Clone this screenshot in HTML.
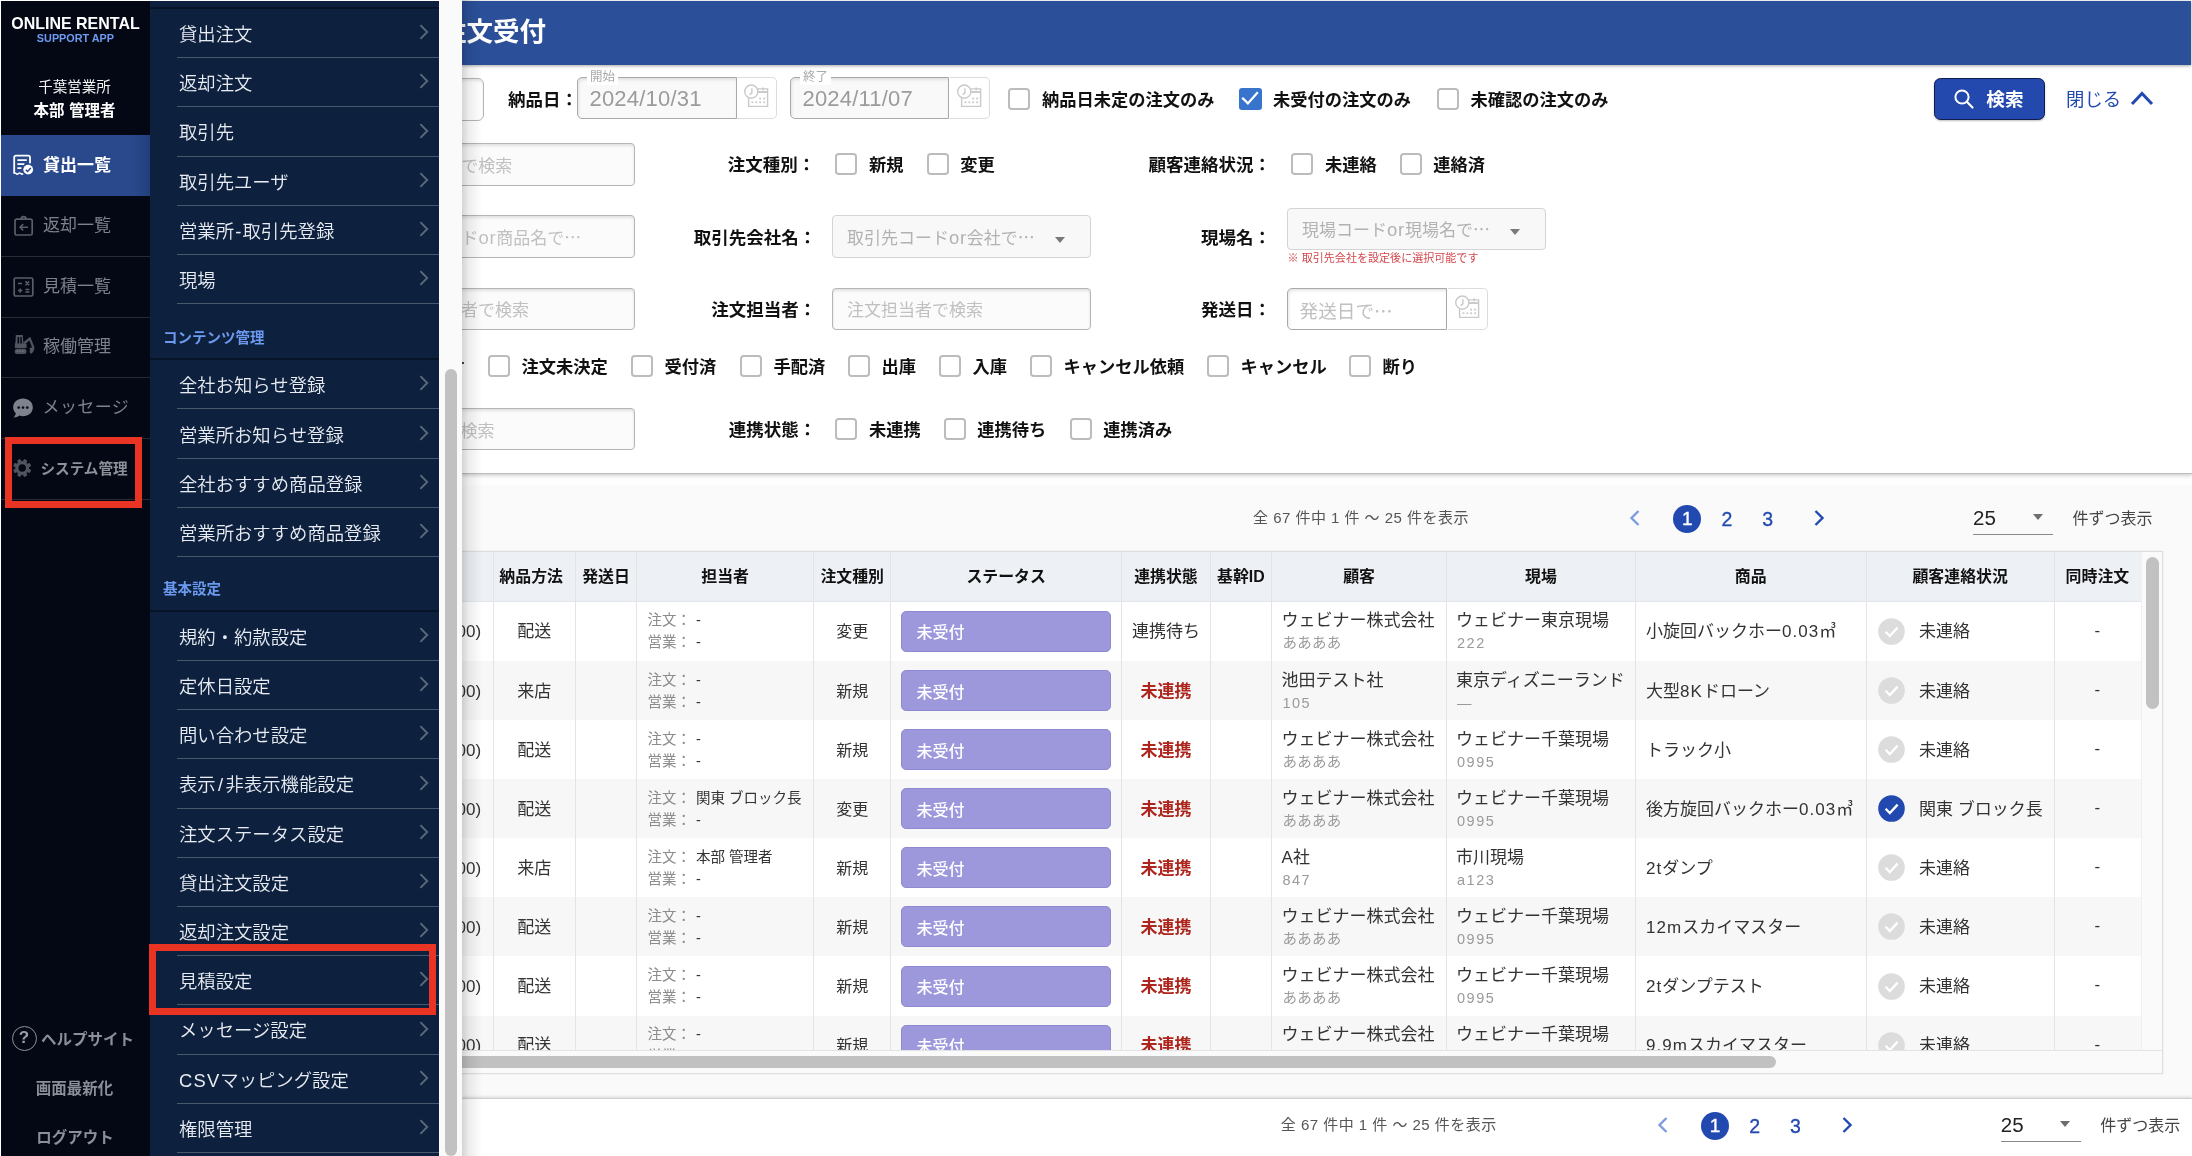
<!DOCTYPE html>
<html lang="ja">
<head>
<meta charset="utf-8">
<title>注文受付</title>
<style>

*{box-sizing:border-box;margin:0;padding:0}
html,body{width:2192px;height:1156px;overflow:hidden;background:#fff}
body{font-family:"Liberation Sans","Noto Sans CJK JP",sans-serif;color:#222;position:relative}
.abs{position:absolute}
/* ---------- sidebar ---------- */
#side,#sub,#main{will-change:transform}
#side{position:absolute;left:1px;top:1px;width:149px;height:1155px;background:#040814;color:#fff}
#side .logo1{position:absolute;left:0;width:149px;top:12.2px;text-align:center;font-weight:700;font-size:16.4px;letter-spacing:0;line-height:20px;color:#fff;white-space:nowrap;transform:scaleX(.975);transform-origin:74px 0}
#side .logo2{position:absolute;left:0;width:149px;top:30px;text-align:center;font-weight:700;font-size:11.5px;line-height:14px;color:#6f9cf3;white-space:nowrap;transform:scaleX(.94);transform-origin:73.2px 0}
#side .office{position:absolute;left:-1px;width:149px;top:75px;text-align:center;font-size:14.5px;line-height:22px;color:#f2f2f2}
#side .user{position:absolute;left:-1px;width:149px;top:98.6px;text-align:center;font-size:15.5px;line-height:22px;font-weight:700;color:#fff}
.nav{position:absolute;left:0;width:149px;height:61px;border-bottom:1px solid #262b36;color:#7d828c;font-size:17px;line-height:60.6px;white-space:nowrap}
.nav span{position:absolute;left:42px;top:0}
.nav svg{position:absolute;left:12px;top:19px}
.nav.act{line-height:62.4px;background:linear-gradient(90deg,#2a498d 0,#2a498d 88%,#223f7c 100%);color:#fff;font-weight:700;border-bottom:none}
.nav.sys{color:#8d9199;font-weight:700;font-size:14.6px;line-height:61px}
.bot{position:absolute;left:0;width:149px;text-align:center;font-weight:700;color:#8b8f99;font-size:15.5px;line-height:25px;white-space:nowrap}
/* ---------- submenu ---------- */
#sub{position:absolute;left:150px;top:0;width:289px;height:1156px;background:#0d203e;color:#e9edf3;overflow:hidden;border-top:1px solid #fff}
.mi{position:absolute;left:26.5px;width:262.5px;height:49.2px;border-bottom:1.3px solid #4a586e;font-size:18.35px;line-height:51.5px;font-weight:350;padding-left:2.5px;white-space:nowrap;color:#e8ecf2}
.mi svg{position:absolute;right:10px;top:14.2px}
.sec{position:absolute;left:13px;font-size:14.5px;font-weight:700;color:#6b9af0;line-height:20px;white-space:nowrap}
.secl{position:absolute;left:0;width:289px;height:2px;background:#071326}
.redbox{position:absolute;border:7px solid #e93323;z-index:50}
/* ---------- main ---------- */
#gap{position:absolute;left:439px;top:0;width:23px;height:1156px;background:#fafafa}
#gap .thumb{position:absolute;left:6px;top:369px;width:12px;height:787px;border-radius:7px;background:#c1c1c1}
#main{position:absolute;left:462px;top:0;width:1730px;height:1156px;background:#fafafa;overflow:hidden}
#hdr{position:absolute;left:0;top:1px;width:1729px;height:64px;background:#2b4f99;box-shadow:0 1px 3px rgba(0,0,0,.35);z-index:5}
#hdr .t{position:absolute;left:-22px;top:0;line-height:62px;font-size:26.5px;font-weight:700;color:#fff;white-space:nowrap}
#lsh{position:absolute;left:0;top:0;width:20px;height:1156px;background:linear-gradient(90deg,rgba(0,0,0,.17),rgba(0,0,0,.07) 35%,rgba(0,0,0,0));z-index:40}

.nav .ic{position:absolute;width:26px;height:26px;line-height:0}
.nav .ic svg{position:static}
.qm{position:absolute;left:10.5px;top:1025px;width:25px;height:25px;border:1.2px solid #8d919b;border-radius:50%;color:#9a9fa8;font-weight:700;font-size:17px;line-height:22.5px;text-align:center}

#fp{position:absolute;left:0;top:65px;width:1730px;height:409px;background:#fff;border-bottom:1.6px solid #bdbdbd;box-shadow:0 2px 3px rgba(0,0,0,.16)}
#fp2{position:absolute;left:0;top:474px;width:1730px;height:11px;background:#fdfdfd}
.lab{position:absolute;font-weight:700;font-size:17.5px;line-height:32.6px;color:#111;white-space:nowrap}
.cb{position:absolute;width:22.2px;height:22.2px;border:2.1px solid #bcbcbc;border-radius:3.8px;background:#fff}
.cb.on{background:#3873cc;border-color:#3873cc;border-radius:3px}
.cb svg{position:absolute;left:-2.1px;top:-2.1px}
.cbl{position:absolute;font-weight:700;font-size:17.25px;line-height:33.4px;color:#111;white-space:nowrap}
.inp{position:absolute;border:1px solid #b5b5b5;border-radius:4px;background:#fbfbfb;box-shadow:inset 0 2px 3px rgba(0,0,0,.10)}
.sel{position:absolute;border:1px solid #d4d4d4;border-radius:4px;background:#f8f8f8}
.ph{position:absolute;font-size:17px;line-height:33px;color:#c0c0c0;white-space:nowrap}
.tri{position:absolute;width:0;height:0;border-left:5.8px solid transparent;border-right:5.8px solid transparent;border-top:6.2px solid #7a7a7a}
.dt{position:absolute;border:1px solid #a9a9a9;border-radius:5px 0 0 5px;background:#f9f9f9;box-shadow:inset 1px 2px 3px rgba(0,0,0,.10)}
.calb{position:absolute;border:1px solid #dcdcdc;border-left:none;border-radius:0 5px 5px 0;background:#fff}
.calb svg{position:absolute;left:5px;top:6px}
.leg{position:absolute;font-size:12.5px;line-height:16px;color:#aaa;background:#fff;padding:0 3px;white-space:nowrap}
.dv{position:absolute;font-size:22px;line-height:32px;color:#9b9b9b;white-space:nowrap;letter-spacing:.2px}
.sbtn{position:absolute;background:#2449ae;border:1.2px solid #101c4c;border-radius:6.5px;color:#fff;box-shadow:0 1px 2px rgba(0,0,0,.25)}
.sbtn span{position:absolute;left:51.5px;top:6.5px;font-size:18.6px;font-weight:700;line-height:30px}
.close{position:absolute;font-size:18.4px;line-height:31.5px;color:#2249b0;white-space:nowrap}
.lo{font-size:18.5px;letter-spacing:.7px;line-height:1px}
.el{font-family:"Noto Sans CJK JP",sans-serif;line-height:1px}
.ph2{color:#b2b2b2}
.note{position:absolute;font-size:11.05px;line-height:17px;color:#d2474c;white-space:nowrap}

.pinfo{position:absolute;font-size:15px;line-height:30.5px;color:#555;white-space:nowrap;letter-spacing:.48px}
.pcur{position:absolute;width:28px;height:28px;border-radius:14px;background:#2249b0;color:#fff;font-size:19px;line-height:28px;text-align:center;-webkit-text-stroke:.35px #fff}
.pnum{position:absolute;width:30px;font-size:19.5px;line-height:30px;color:#2249b0;text-align:center;-webkit-text-stroke:.3px #2249b0}
.psel{position:absolute;font-size:20.5px;line-height:32px;color:#222}
.pper{position:absolute;font-size:16px;line-height:32px;color:#444;white-space:nowrap}
#tw{position:absolute;background:#fff;border:1px solid #dedede;box-shadow:0 0 2px rgba(0,0,0,.08)}
#tb{position:absolute;overflow:hidden;background:#fff}
.th{position:absolute;height:50.3px;background:#edf1f5;border-bottom:1px solid #e2e6ea}
.thc{position:absolute;text-align:center;font-weight:700;font-size:15.9px;line-height:30px;color:#111;white-space:nowrap}
.tr{position:absolute;left:0}
.vl{position:absolute;top:0;width:1px;height:520px;background:#e4e4e4}
.cc{text-align:center}
.c17{position:absolute;font-size:17px;line-height:31.8px;color:#333;white-space:nowrap}
.c16{position:absolute;font-size:16px;line-height:32px;color:#333;white-space:nowrap}
.c14{position:absolute;font-size:14.5px;line-height:29.5px;color:#333;white-space:nowrap}
.c14g{position:absolute;font-size:14.5px;line-height:29.5px;color:#8c8c8c;white-space:nowrap}
.c14s{position:absolute;font-size:14.5px;line-height:29.5px;color:#9a9a9a;white-space:nowrap;letter-spacing:.3px}
.lt{letter-spacing:1.05px}
.lt2{letter-spacing:1.5px}
.c17.red{color:#ad251c;font-weight:700}
.badge{position:absolute;width:210px;height:41px;border-radius:5px;background:#9d98dc;border:1px solid #8e89d1;color:#fff}
.badge span{position:absolute;left:14.5px;top:6.5px;font-size:16px;line-height:30px;font-weight:500}
#ft{position:absolute;left:0;top:1098px;width:1730px;height:58px;background:#fff;border-top:1px solid #d0d0d0;box-shadow:0 -1px 3px rgba(0,0,0,.15)}

</style>
</head>
<body>

<div id="side">
  <div class="logo1">ONLINE RENTAL</div>
  <div class="logo2">SUPPORT APP</div>
  <div class="office">千葉営業所</div>
  <div class="user">本部 管理者</div>
  <div class="nav act" style="top:134px"><div class="ic" style="left:11px;top:18px"><svg width="24" height="24" viewBox="0 0 24 24"><g fill="none" stroke="#fff" stroke-width="1.8" stroke-linejoin="round"><path d="M2.2 20.2 V4.4 Q2.2 2.6 4 2.6 H16.2 Q18 2.6 18 4.4 V10.5"/><path d="M5.4 7.2 H14.8 M5.4 11.2 H12.4 M5.4 15.2 H9.4" stroke-width="1.7"/><path d="M1.6 20.6 q1.2 -1.4 2.4 0 t2.4 0 t2.4 0 t2.4 0" stroke-width="1.5"/></g><circle cx="16.2" cy="16.6" r="6.3" fill="#2a498d"/><circle cx="16.2" cy="16.6" r="4.9" fill="#fff"/><path d="M13.8 16.7 L15.6 18.5 L18.8 14.9" fill="none" stroke="#2a498d" stroke-width="1.5"/></svg></div><span style="left:42px">貸出一覧</span></div>
  <div class="nav " style="top:195px"><div class="ic" style="left:11px;top:18px"><svg width="24" height="24" viewBox="0 0 24 24"><g fill="none" stroke="#5a5e69" stroke-width="1.7" stroke-linejoin="round"><rect x="3" y="5.2" width="17.2" height="15.8" rx="1.6"/><path d="M9.2 5 Q9.2 2.6 11.6 2.6 Q14 2.6 14 5"/><path d="M16 13.2 H8.2 M11.2 10 L8 13.2 L11.2 16.4" stroke-width="1.6"/></g></svg></div><span style="left:42px">返却一覧</span></div>
  <div class="nav " style="top:256px"><div class="ic" style="left:11px;top:18px"><svg width="24" height="24" viewBox="0 0 24 24"><g fill="none" stroke="#5a5e69" stroke-width="1.7"><rect x="2.2" y="3" width="18.6" height="18" rx="1.6"/><path d="M6 8.4 H10 M13.4 6.4 L17.2 10.2 M17.2 6.4 L13.4 10.2 M6 15.6 H10.4 M8.2 13.4 V17.8 M13.4 14.4 H17.4 M13.4 17 H17.4" stroke-width="1.5"/></g></svg></div><span style="left:42px">見積一覧</span></div>
  <div class="nav " style="top:316px"><div class="ic" style="left:11px;top:13px"><svg width="26" height="26" viewBox="0 0 26 26"><g fill="#50545f"><path d="M3.8 5 H10.7 L11.6 13.8 H14.6 V17.9 H2.9 V13.2 L3.4 13.2 Z"/><rect x="2.7" y="18.7" width="11.8" height="5.2" rx="2.5"/><path d="M11.4 12.2 L18.2 6.8 L22.6 17.4 L20.4 18.2 L17.4 10.6 L12.6 14.6 Z"/><path d="M17.4 18.2 L22 16.4 Q23.4 20.4 19 23.9 L17.5 22.2 Q18.8 20.4 17.4 18.2 Z"/></g><path d="M5.6 7 H7.1 V13.6 H5.6 Z M8.3 7 H9.6 L10 13.6 H8.3 Z" fill="#040814"/><path d="M4.6 21.3 H12.8" stroke="#7a7e88" stroke-width="1.1" stroke-dasharray="1.5 1.3"/></svg></div><span style="left:42px">稼働管理</span></div>
  <div class="nav " style="top:377px"><div class="ic" style="left:10.2px;top:17.6px"><svg width="24" height="24" viewBox="0 0 24 24"><path d="M12 2.6 C6.4 2.6 2.2 6.4 2.2 11.2 C2.2 13.6 3.2 15.6 4.8 17.2 C4.6 18.8 3.8 20.4 2.4 21.6 C5 21.6 7 20.8 8.4 19.6 C9.6 20 10.8 20.2 12 20.2 C17.6 20.2 21.8 16.2 21.8 11.4 C21.8 6.4 17.6 2.6 12 2.6 Z" fill="#7e828c"/><circle cx="7.7" cy="11.6" r="1.35" fill="#0b1020"/><circle cx="12" cy="11.6" r="1.35" fill="#0b1020"/><circle cx="16.3" cy="11.6" r="1.35" fill="#0b1020"/></svg></div><span style="left:41.6px"><b style="font-weight:400;letter-spacing:.35px">メッセージ</b></span></div>
  <div class="nav sys" style="top:438px"><div class="ic" style="left:11px;top:18px"><svg width="24" height="24" viewBox="0 0 24 24"><path d="M11.17 4.67 L12.29 2.55 L14.69 3.55 L13.98 5.84 L15.36 7.22 L17.65 6.51 L18.65 8.91 L16.53 10.03 L16.53 11.97 L18.65 13.09 L17.65 15.49 L15.36 14.78 L13.98 16.16 L14.69 18.45 L12.29 19.45 L11.17 17.33 L9.23 17.33 L8.11 19.45 L5.71 18.45 L6.42 16.16 L5.04 14.78 L2.75 15.49 L1.75 13.09 L3.87 11.97 L3.87 10.03 L1.75 8.91 L2.75 6.51 L5.04 7.22 L6.42 5.84 L5.71 3.55 L8.11 2.55 L9.23 4.67 Z" fill="#50545f" stroke="#50545f" stroke-width="1" stroke-linejoin="round"/><circle cx="10.2" cy="11" r="3.7" fill="#040814"/></svg></div><span style="left:39.5px">システム管理</span></div>
  <div class="qm">?</div>
  <div class="bot" style="top:1025.5px;left:40px;width:auto">ヘルプサイト</div>
  <div class="bot" style="top:1075px;left:-1px">画面最新化</div>
  <div class="bot" style="top:1124px;left:-0.5px">ログアウト</div>
</div>
<div id="sub">
<div class="secl" style="top:6px"></div>
<div class="mi" style="top:8.0px">貸出注文<svg width="10" height="18" viewBox="0 0 10 18"><path d="M1.4 2.2 L8.2 9 L1.4 15.8" fill="none" stroke="#5b6a79" stroke-width="1.9"/></svg></div>
<div class="mi" style="top:57.2px">返却注文<svg width="10" height="18" viewBox="0 0 10 18"><path d="M1.4 2.2 L8.2 9 L1.4 15.8" fill="none" stroke="#5b6a79" stroke-width="1.9"/></svg></div>
<div class="mi" style="top:106.4px">取引先<svg width="10" height="18" viewBox="0 0 10 18"><path d="M1.4 2.2 L8.2 9 L1.4 15.8" fill="none" stroke="#5b6a79" stroke-width="1.9"/></svg></div>
<div class="mi" style="top:155.6px">取引先ユーザ<svg width="10" height="18" viewBox="0 0 10 18"><path d="M1.4 2.2 L8.2 9 L1.4 15.8" fill="none" stroke="#5b6a79" stroke-width="1.9"/></svg></div>
<div class="mi" style="top:204.8px">営業所<span style="padding:0 1.2px">-</span>取引先登録<svg width="10" height="18" viewBox="0 0 10 18"><path d="M1.4 2.2 L8.2 9 L1.4 15.8" fill="none" stroke="#5b6a79" stroke-width="1.9"/></svg></div>
<div class="mi" style="top:254.0px">現場<svg width="10" height="18" viewBox="0 0 10 18"><path d="M1.4 2.2 L8.2 9 L1.4 15.8" fill="none" stroke="#5b6a79" stroke-width="1.9"/></svg></div>
<div class="sec" style="top:327px">コンテンツ管理</div>
<div class="secl" style="top:356.5px"></div>
<div class="mi" style="top:359.3px">全社お知らせ登録<svg width="10" height="18" viewBox="0 0 10 18"><path d="M1.4 2.2 L8.2 9 L1.4 15.8" fill="none" stroke="#5b6a79" stroke-width="1.9"/></svg></div>
<div class="mi" style="top:408.5px">営業所お知らせ登録<svg width="10" height="18" viewBox="0 0 10 18"><path d="M1.4 2.2 L8.2 9 L1.4 15.8" fill="none" stroke="#5b6a79" stroke-width="1.9"/></svg></div>
<div class="mi" style="top:457.7px">全社おすすめ商品登録<svg width="10" height="18" viewBox="0 0 10 18"><path d="M1.4 2.2 L8.2 9 L1.4 15.8" fill="none" stroke="#5b6a79" stroke-width="1.9"/></svg></div>
<div class="mi" style="top:506.9px">営業所おすすめ商品登録<svg width="10" height="18" viewBox="0 0 10 18"><path d="M1.4 2.2 L8.2 9 L1.4 15.8" fill="none" stroke="#5b6a79" stroke-width="1.9"/></svg></div>
<div class="sec" style="top:578px">基本設定</div>
<div class="secl" style="top:608.5px"></div>
<div class="mi" style="top:610.8px">規約・約款設定<svg width="10" height="18" viewBox="0 0 10 18"><path d="M1.4 2.2 L8.2 9 L1.4 15.8" fill="none" stroke="#5b6a79" stroke-width="1.9"/></svg></div>
<div class="mi" style="top:660.0px">定休日設定<svg width="10" height="18" viewBox="0 0 10 18"><path d="M1.4 2.2 L8.2 9 L1.4 15.8" fill="none" stroke="#5b6a79" stroke-width="1.9"/></svg></div>
<div class="mi" style="top:709.2px">問い合わせ設定<svg width="10" height="18" viewBox="0 0 10 18"><path d="M1.4 2.2 L8.2 9 L1.4 15.8" fill="none" stroke="#5b6a79" stroke-width="1.9"/></svg></div>
<div class="mi" style="top:758.4px">表示<span style="padding:0 2.6px 0 2.2px">/</span>非表示機能設定<svg width="10" height="18" viewBox="0 0 10 18"><path d="M1.4 2.2 L8.2 9 L1.4 15.8" fill="none" stroke="#5b6a79" stroke-width="1.9"/></svg></div>
<div class="mi" style="top:807.6px">注文ステータス設定<svg width="10" height="18" viewBox="0 0 10 18"><path d="M1.4 2.2 L8.2 9 L1.4 15.8" fill="none" stroke="#5b6a79" stroke-width="1.9"/></svg></div>
<div class="mi" style="top:856.8px">貸出注文設定<svg width="10" height="18" viewBox="0 0 10 18"><path d="M1.4 2.2 L8.2 9 L1.4 15.8" fill="none" stroke="#5b6a79" stroke-width="1.9"/></svg></div>
<div class="mi" style="top:906.0px">返却注文設定<svg width="10" height="18" viewBox="0 0 10 18"><path d="M1.4 2.2 L8.2 9 L1.4 15.8" fill="none" stroke="#5b6a79" stroke-width="1.9"/></svg></div>
<div class="mi" style="top:955.2px">見積設定<svg width="10" height="18" viewBox="0 0 10 18"><path d="M1.4 2.2 L8.2 9 L1.4 15.8" fill="none" stroke="#5b6a79" stroke-width="1.9"/></svg></div>
<div class="mi" style="top:1004.4px">メッセージ設定<svg width="10" height="18" viewBox="0 0 10 18"><path d="M1.4 2.2 L8.2 9 L1.4 15.8" fill="none" stroke="#5b6a79" stroke-width="1.9"/></svg></div>
<div class="mi" style="top:1053.6px"><span style="letter-spacing:1.2px">CSV</span>マッピング設定<svg width="10" height="18" viewBox="0 0 10 18"><path d="M1.4 2.2 L8.2 9 L1.4 15.8" fill="none" stroke="#5b6a79" stroke-width="1.9"/></svg></div>
<div class="mi" style="top:1102.8px">権限管理<svg width="10" height="18" viewBox="0 0 10 18"><path d="M1.4 2.2 L8.2 9 L1.4 15.8" fill="none" stroke="#5b6a79" stroke-width="1.9"/></svg></div>
</div>

<div id="gap"><div class="thumb"></div></div>
<div id="main">
  <div id="hdr"><div class="t">注文受付</div></div>
<div id="fp2"></div><div id="fp"></div>
<div class="inp" style="left:-40px;top:77.5px;width:61.5px;height:43px;border-radius:6px;background:#fff"></div>
<div class="lab" style="right:1614.0px;top:84.3px">納品日：</div>
<div class="dt" style="left:114.6px;top:76.9px;width:160.0px;height:42.2px"></div><div class="calb" style="left:274.6px;top:76.9px;width:40.8px;height:42.2px"><svg width="30" height="26" viewBox="0 0 30 26"><g fill="none" stroke="#c9c9c9" stroke-width="1.4"><path d="M15.8 4.9 H25.6 V22.4 H6.6 V14"/><path d="M15.5 8 H25.6" stroke-width="1.9"/><path d="M21.2 3.4 V6.2" stroke-width="1.6"/></g><g fill="#cdcdcd"><rect x="17.2" y="13.6" width="1.9" height="1.9"/><rect x="21.2" y="13.6" width="1.9" height="1.9"/><rect x="9.5" y="17.3" width="1.9" height="1.9"/><rect x="13.4" y="17.3" width="1.9" height="1.9"/><rect x="17.2" y="17.3" width="1.9" height="1.9"/><rect x="21.2" y="17.3" width="1.9" height="1.9"/></g><circle cx="9.3" cy="7.6" r="6.6" fill="#fff" stroke="#c9c9c9" stroke-width="1.4"/><path d="M9.9 4.2 V8.8 L7.6 10.6" fill="none" stroke="#c9c9c9" stroke-width="1.4"/></svg></div><div class="leg" style="left:125.0px;top:68.5px">開始</div><div class="dv" style="left:127.5px;top:83.0px">2024/10/31</div>
<div class="dt" style="left:327.6px;top:76.9px;width:159.9px;height:42.2px"></div><div class="calb" style="left:487.5px;top:76.9px;width:40.6px;height:42.2px"><svg width="30" height="26" viewBox="0 0 30 26"><g fill="none" stroke="#c9c9c9" stroke-width="1.4"><path d="M15.8 4.9 H25.6 V22.4 H6.6 V14"/><path d="M15.5 8 H25.6" stroke-width="1.9"/><path d="M21.2 3.4 V6.2" stroke-width="1.6"/></g><g fill="#cdcdcd"><rect x="17.2" y="13.6" width="1.9" height="1.9"/><rect x="21.2" y="13.6" width="1.9" height="1.9"/><rect x="9.5" y="17.3" width="1.9" height="1.9"/><rect x="13.4" y="17.3" width="1.9" height="1.9"/><rect x="17.2" y="17.3" width="1.9" height="1.9"/><rect x="21.2" y="17.3" width="1.9" height="1.9"/></g><circle cx="9.3" cy="7.6" r="6.6" fill="#fff" stroke="#c9c9c9" stroke-width="1.4"/><path d="M9.9 4.2 V8.8 L7.6 10.6" fill="none" stroke="#c9c9c9" stroke-width="1.4"/></svg></div><div class="leg" style="left:338.0px;top:68.5px">終了</div><div class="dv" style="left:340.5px;top:83.0px">2024/11/07</div>
<div class="cb" style="left:546.3px;top:87.5px"></div><div class="cbl" style="left:579.9px;top:83.6px">納品日未定の注文のみ</div>
<div class="cb on" style="left:777.4px;top:87.5px"><svg width="22" height="22" viewBox="0 0 22 22"><path d="M3.2 10.8 L8.9 16.4 L18.8 5.2" fill="none" stroke="#fff" stroke-width="2.3"/></svg></div><div class="cbl" style="left:811.0px;top:83.6px">未受付の注文のみ</div>
<div class="cb" style="left:975.0px;top:87.5px"></div><div class="cbl" style="left:1008.6px;top:83.6px">未確認の注文のみ</div>
<div class="sbtn" style="left:1471.8px;top:77.7px;width:111.2px;height:42.3px"><svg width="22" height="22" viewBox="0 0 22 22" style="position:absolute;left:18.5px;top:9px"><circle cx="9" cy="9" r="6.6" fill="none" stroke="#fff" stroke-width="2"/><path d="M13.8 13.8 L19.5 19.5" stroke="#fff" stroke-width="2.2" stroke-linecap="round"/></svg><span>検索</span></div>
<div class="close" style="left:1604.0px;top:84px">閉じる</div>
<svg class="abs" style="left:1667.0px;top:89px" width="26" height="18" viewBox="0 0 26 18"><path d="M3 15 L13 4.5 L23 15" fill="none" stroke="#2249b0" stroke-width="3"/></svg>
<div class="inp" style="left:-42.0px;top:142.7px;width:215.2px;height:43.6px"></div><div class="ph" style="left:-0.8px;top:150.0px">で検索</div>
<div class="lab" style="right:1376.8px;top:149.0px">注文種別：</div>
<div class="cb" style="left:373.3px;top:152.5px"></div><div class="cbl" style="left:406.9px;top:148.6px">新規</div>
<div class="cb" style="left:464.7px;top:152.5px"></div><div class="cbl" style="left:498.3px;top:148.6px">変更</div>
<div class="lab" style="right:921.1px;top:149.0px">顧客連絡状況：</div>
<div class="cb" style="left:829.3px;top:152.5px"></div><div class="cbl" style="left:862.9px;top:148.6px">未連絡</div>
<div class="cb" style="left:937.7px;top:152.5px"></div><div class="cbl" style="left:971.3px;top:148.6px">連絡済</div>
<div class="inp" style="left:-42.0px;top:214.8px;width:215.2px;height:43.2px"></div><div class="ph" style="left:-0.5px;top:221.9px">ド<span class="lo">or</span>商品名で<span class="el">…</span></div>
<div class="lab" style="right:1375.8px;top:222.0px">取引先会社名：</div>
<div class="sel" style="left:370.1px;top:214.9px;width:258.5px;height:43.2px"></div><div class="ph ph2" style="left:384.9px;top:222.0px">取引先コード<span class="lo">or</span>会社で<span class="el">…</span></div><div class="tri" style="left:592.6px;top:236.7px"></div>
<div class="lab" style="right:921.1px;top:222.0px">現場名：</div>
<div class="sel" style="left:825.3px;top:207.9px;width:258.5px;height:41.9px"></div><div class="ph ph2" style="left:840.1px;top:214.3px">現場コード<span class="lo">or</span>現場名で<span class="el">…</span></div><div class="tri" style="left:1048.0px;top:229.0px"></div>
<div class="note" style="left:825.6px;top:250px">※ 取引先会社を設定後に選択可能です</div>
<div class="inp" style="left:-42.0px;top:287.5px;width:215.2px;height:42.7px"></div><div class="ph" style="left:-1.0px;top:294.4px">者で検索</div>
<div class="lab" style="right:1375.8px;top:294.3px">注文担当者：</div>
<div class="inp" style="left:370.4px;top:287.5px;width:258.4px;height:42.7px"></div><div class="ph" style="left:384.9px;top:294.4px">注文担当者で検索</div>
<div class="lab" style="right:921.1px;top:294.3px">発送日：</div>
<div class="dt" style="background:#fff;left:825.2px;top:287.6px;width:160.3px;height:42.4px"></div><div class="calb" style="left:985.5px;top:287.6px;width:40.6px;height:42.4px"><svg width="30" height="26" viewBox="0 0 30 26"><g fill="none" stroke="#c9c9c9" stroke-width="1.4"><path d="M15.8 4.9 H25.6 V22.4 H6.6 V14"/><path d="M15.5 8 H25.6" stroke-width="1.9"/><path d="M21.2 3.4 V6.2" stroke-width="1.6"/></g><g fill="#cdcdcd"><rect x="17.2" y="13.6" width="1.9" height="1.9"/><rect x="21.2" y="13.6" width="1.9" height="1.9"/><rect x="9.5" y="17.3" width="1.9" height="1.9"/><rect x="13.4" y="17.3" width="1.9" height="1.9"/><rect x="17.2" y="17.3" width="1.9" height="1.9"/><rect x="21.2" y="17.3" width="1.9" height="1.9"/></g><circle cx="9.3" cy="7.6" r="6.6" fill="#fff" stroke="#c9c9c9" stroke-width="1.4"/><path d="M9.9 4.2 V8.8 L7.6 10.6" fill="none" stroke="#c9c9c9" stroke-width="1.4"/></svg></div><div class="dv" style="left:838.1px;top:293.9px"></div>
<div class="ph" style="font-size:18.6px;left:837.6px;top:294.9px">発送日で<span class="el">…</span></div>
<div class="abs" style="left:0.2px;top:362px;width:1.7px;height:2px;background:#444"></div>
<div class="cb" style="left:26.0px;top:355.2px"></div><div class="cbl" style="left:59.6px;top:351.3px">注文未決定</div>
<div class="cb" style="left:169.0px;top:355.2px"></div><div class="cbl" style="left:202.6px;top:351.3px">受付済</div>
<div class="cb" style="left:277.8px;top:355.2px"></div><div class="cbl" style="left:311.4px;top:351.3px">手配済</div>
<div class="cb" style="left:385.8px;top:355.2px"></div><div class="cbl" style="left:419.4px;top:351.3px">出庫</div>
<div class="cb" style="left:477.0px;top:355.2px"></div><div class="cbl" style="left:510.6px;top:351.3px">入庫</div>
<div class="cb" style="left:568.0px;top:355.2px"></div><div class="cbl" style="left:601.6px;top:351.3px">キャンセル依頼</div>
<div class="cb" style="left:745.0px;top:355.2px"></div><div class="cbl" style="left:778.6px;top:351.3px">キャンセル</div>
<div class="cb" style="left:887.0px;top:355.2px"></div><div class="cbl" style="left:920.6px;top:351.3px">断り</div>
<div class="inp" style="left:-42.0px;top:407.9px;width:215.2px;height:42.3px"></div><div class="ph" style="left:-1.6px;top:414.6px">検索</div>
<div class="lab" style="right:1375.8px;top:414.0px">連携状態：</div>
<div class="cb" style="left:373.3px;top:417.7px"></div><div class="cbl" style="left:406.9px;top:413.8px">未連携</div>
<div class="cb" style="left:481.7px;top:417.7px"></div><div class="cbl" style="left:515.3px;top:413.8px">連携待ち</div>
<div class="cb" style="left:607.6px;top:417.7px"></div><div class="cbl" style="left:641.2px;top:413.8px">連携済み</div>
<div class="pinfo" style="left:791.0px;top:503.0px">全 67 件中 1 件 ～ 25 件を表示</div><svg class="abs" style="left:1166.0px;top:508.0px" width="14" height="20" viewBox="0 0 14 20"><path d="M10.5 3 L3.5 10 L10.5 17" fill="none" stroke="#7f9be0" stroke-width="2.4"/></svg><div class="pcur" style="left:1211.2px;top:504.6px">1</div><div class="pnum" style="left:1250.0px;top:503.5px">2</div><div class="pnum" style="left:1290.6px;top:503.5px">3</div><svg class="abs" style="left:1350.0px;top:508.0px" width="14" height="20" viewBox="0 0 14 20"><path d="M3.5 3 L10.5 10 L3.5 17" fill="none" stroke="#2249b0" stroke-width="2.4"/></svg><div class="psel" style="left:1511.0px;top:502.0px">25</div><div class="tri" style="left:1570.6px;top:513.5px;border-top-color:#6e6e6e"></div><div class="abs" style="left:1511.0px;top:533.5px;width:80px;height:1.5px;background:#8a8a8a"></div><div class="pper" style="left:1610.4px;top:503.0px">件ずつ表示</div>
<div id="tw" style="left:-10px;top:551px;width:1711.0px;height:523px"></div>
<div id="tb" style="left:0;top:551.5px;width:1678.5px;height:498.5px"><div class="th" style="left:0;top:0;width:1678.5px"></div>
<div class="thc" style="left:28.0px;width:82.3px;top:10.6px">納品方法</div>
<div class="thc" style="left:113.3px;width:61.4px;top:10.6px">発送日</div>
<div class="thc" style="left:174.7px;width:177.0px;top:10.6px">担当者</div>
<div class="thc" style="left:351.7px;width:77.1px;top:10.6px">注文種別</div>
<div class="thc" style="left:428.8px;width:230.7px;top:10.6px">ステータス</div>
<div class="thc" style="left:659.5px;width:88.9px;top:10.6px">連携状態</div>
<div class="thc" style="left:748.4px;width:61.1px;top:10.6px">基幹ID</div>
<div class="thc" style="left:809.5px;width:175.1px;top:10.6px">顧客</div>
<div class="thc" style="left:984.6px;width:188.7px;top:10.6px">現場</div>
<div class="thc" style="left:1173.3px;width:230.7px;top:10.6px">商品</div>
<div class="thc" style="left:1404.0px;width:188.3px;top:10.6px">顧客連絡状況</div>
<div class="thc" style="left:1592.3px;width:86.2px;top:10.6px">同時注文</div>
<div class="tr" style="top:50.3px;height:59.6px;background:#fff;width:1678.5px"></div>
<div class="c17" style="left:-5.5px;top:64.8px">00)</div>
<div class="c17 cc" style="left:31.0px;width:82.3px;top:64.8px">配送</div>
<div class="c14g" style="left:185.5px;top:54.8px">注文：</div><div class="c14" style="left:234.0px;top:54.8px">-</div>
<div class="c14g" style="left:185.5px;top:76.8px">営業：</div><div class="c14" style="left:234.0px;top:76.8px">-</div>
<div class="c16 cc" style="left:351.7px;width:77.1px;top:64.8px">変更</div>
<div class="badge" style="left:438.9px;top:59.3px"><span>未受付</span></div>
<div class="c17 cc" style="left:659.5px;width:88.9px;top:64.8px">連携待ち</div>
<div class="c17" style="left:819.6px;top:53.8px">ウェビナー株式会社</div><div class="c14s" style="left:820.4px;top:77.8px">ああああ</div>
<div class="c17" style="left:994.0px;top:53.8px">ウェビナー東京現場</div><div class="c14s" style="left:995.0px;top:77.8px"><span class="lt2">222</span></div>
<div class="c17" style="left:1184.0px;top:64.8px">小旋回バックホー<span class="lt">0.03</span>㎥</div>
<div class="abs" style="left:1415.9px;top:66.3px;width:27px;height:27px"><svg width="27" height="27" viewBox="0 0 27 27"><circle cx="13.5" cy="13.5" r="13.3" fill="#dcdcdc"/><path d="M7.6 13.8 L11.8 18 L19.6 9.6" fill="none" stroke="#fff" stroke-width="2.3"/></svg></div>
<div class="c17" style="left:1457.0px;top:64.8px">未連絡</div>
<div class="c17 cc" style="left:1592.3px;width:86.2px;top:64.8px;margin-top:-1.6px">-</div>
<div class="tr" style="top:109.4px;height:59.6px;background:#f7f7f7;width:1678.5px"></div>
<div class="c17" style="left:-5.5px;top:124.0px">00)</div>
<div class="c17 cc" style="left:31.0px;width:82.3px;top:124.0px">来店</div>
<div class="c14g" style="left:185.5px;top:114.0px">注文：</div><div class="c14" style="left:234.0px;top:114.0px">-</div>
<div class="c14g" style="left:185.5px;top:136.0px">営業：</div><div class="c14" style="left:234.0px;top:136.0px">-</div>
<div class="c16 cc" style="left:351.7px;width:77.1px;top:124.0px">新規</div>
<div class="badge" style="left:438.9px;top:118.5px"><span>未受付</span></div>
<div class="c17 red cc" style="left:659.5px;width:88.9px;top:124.0px">未連携</div>
<div class="c17" style="left:819.6px;top:113.0px">池田テスト社</div><div class="c14s" style="left:820.4px;top:137.0px"><span class="lt2">105</span></div>
<div class="c17" style="left:994.0px;top:113.0px">東京ディズニーランド</div><div class="c14s" style="left:995.0px;top:137.0px">―</div>
<div class="c17" style="left:1184.0px;top:124.0px">大型<span class="lt">8K</span>ドローン</div>
<div class="abs" style="left:1415.9px;top:125.5px;width:27px;height:27px"><svg width="27" height="27" viewBox="0 0 27 27"><circle cx="13.5" cy="13.5" r="13.3" fill="#dcdcdc"/><path d="M7.6 13.8 L11.8 18 L19.6 9.6" fill="none" stroke="#fff" stroke-width="2.3"/></svg></div>
<div class="c17" style="left:1457.0px;top:124.0px">未連絡</div>
<div class="c17 cc" style="left:1592.3px;width:86.2px;top:124.0px;margin-top:-1.6px">-</div>
<div class="tr" style="top:168.5px;height:59.6px;background:#fff;width:1678.5px"></div>
<div class="c17" style="left:-5.5px;top:183.1px">00)</div>
<div class="c17 cc" style="left:31.0px;width:82.3px;top:183.1px">配送</div>
<div class="c14g" style="left:185.5px;top:173.1px">注文：</div><div class="c14" style="left:234.0px;top:173.1px">-</div>
<div class="c14g" style="left:185.5px;top:195.1px">営業：</div><div class="c14" style="left:234.0px;top:195.1px">-</div>
<div class="c16 cc" style="left:351.7px;width:77.1px;top:183.1px">新規</div>
<div class="badge" style="left:438.9px;top:177.6px"><span>未受付</span></div>
<div class="c17 red cc" style="left:659.5px;width:88.9px;top:183.1px">未連携</div>
<div class="c17" style="left:819.6px;top:172.1px">ウェビナー株式会社</div><div class="c14s" style="left:820.4px;top:196.1px">ああああ</div>
<div class="c17" style="left:994.0px;top:172.1px">ウェビナー千葉現場</div><div class="c14s" style="left:995.0px;top:196.1px"><span class="lt2">0995</span></div>
<div class="c17" style="left:1184.0px;top:183.1px">トラック小</div>
<div class="abs" style="left:1415.9px;top:184.6px;width:27px;height:27px"><svg width="27" height="27" viewBox="0 0 27 27"><circle cx="13.5" cy="13.5" r="13.3" fill="#dcdcdc"/><path d="M7.6 13.8 L11.8 18 L19.6 9.6" fill="none" stroke="#fff" stroke-width="2.3"/></svg></div>
<div class="c17" style="left:1457.0px;top:183.1px">未連絡</div>
<div class="c17 cc" style="left:1592.3px;width:86.2px;top:183.1px;margin-top:-1.6px">-</div>
<div class="tr" style="top:227.6px;height:59.6px;background:#f7f7f7;width:1678.5px"></div>
<div class="c17" style="left:-5.5px;top:242.2px">00)</div>
<div class="c17 cc" style="left:31.0px;width:82.3px;top:242.2px">配送</div>
<div class="c14g" style="left:185.5px;top:232.2px">注文：</div><div class="c14" style="left:234.0px;top:232.2px">関東 ブロック長</div>
<div class="c14g" style="left:185.5px;top:254.2px">営業：</div><div class="c14" style="left:234.0px;top:254.2px">-</div>
<div class="c16 cc" style="left:351.7px;width:77.1px;top:242.2px">変更</div>
<div class="badge" style="left:438.9px;top:236.7px"><span>未受付</span></div>
<div class="c17 red cc" style="left:659.5px;width:88.9px;top:242.2px">未連携</div>
<div class="c17" style="left:819.6px;top:231.2px">ウェビナー株式会社</div><div class="c14s" style="left:820.4px;top:255.2px">ああああ</div>
<div class="c17" style="left:994.0px;top:231.2px">ウェビナー千葉現場</div><div class="c14s" style="left:995.0px;top:255.2px"><span class="lt2">0995</span></div>
<div class="c17" style="left:1184.0px;top:242.2px">後方旋回バックホー<span class="lt">0.03</span>㎥</div>
<div class="abs" style="left:1415.9px;top:243.7px;width:27px;height:27px"><svg width="27" height="27" viewBox="0 0 27 27"><circle cx="13.5" cy="13.5" r="13.3" fill="#2249b0"/><path d="M7.6 13.8 L11.8 18 L19.6 9.6" fill="none" stroke="#fff" stroke-width="2.3"/></svg></div>
<div class="c17" style="left:1457.0px;top:242.2px">関東 ブロック長</div>
<div class="c17 cc" style="left:1592.3px;width:86.2px;top:242.2px;margin-top:-1.6px">-</div>
<div class="tr" style="top:286.7px;height:59.6px;background:#fff;width:1678.5px"></div>
<div class="c17" style="left:-5.5px;top:301.2px">00)</div>
<div class="c17 cc" style="left:31.0px;width:82.3px;top:301.2px">来店</div>
<div class="c14g" style="left:185.5px;top:291.2px">注文：</div><div class="c14" style="left:234.0px;top:291.2px">本部 管理者</div>
<div class="c14g" style="left:185.5px;top:313.2px">営業：</div><div class="c14" style="left:234.0px;top:313.2px">-</div>
<div class="c16 cc" style="left:351.7px;width:77.1px;top:301.2px">新規</div>
<div class="badge" style="left:438.9px;top:295.8px"><span>未受付</span></div>
<div class="c17 red cc" style="left:659.5px;width:88.9px;top:301.2px">未連携</div>
<div class="c17" style="left:819.6px;top:290.2px">A社</div><div class="c14s" style="left:820.4px;top:314.2px"><span class="lt2">847</span></div>
<div class="c17" style="left:994.0px;top:290.2px">市川現場</div><div class="c14s" style="left:995.0px;top:314.2px"><span class="lt2">a123</span></div>
<div class="c17" style="left:1184.0px;top:301.2px"><span class="lt">2t</span>ダンプ</div>
<div class="abs" style="left:1415.9px;top:302.8px;width:27px;height:27px"><svg width="27" height="27" viewBox="0 0 27 27"><circle cx="13.5" cy="13.5" r="13.3" fill="#dcdcdc"/><path d="M7.6 13.8 L11.8 18 L19.6 9.6" fill="none" stroke="#fff" stroke-width="2.3"/></svg></div>
<div class="c17" style="left:1457.0px;top:301.2px">未連絡</div>
<div class="c17 cc" style="left:1592.3px;width:86.2px;top:301.2px;margin-top:-1.6px">-</div>
<div class="tr" style="top:345.8px;height:59.6px;background:#f7f7f7;width:1678.5px"></div>
<div class="c17" style="left:-5.5px;top:360.4px">00)</div>
<div class="c17 cc" style="left:31.0px;width:82.3px;top:360.4px">配送</div>
<div class="c14g" style="left:185.5px;top:350.4px">注文：</div><div class="c14" style="left:234.0px;top:350.4px">-</div>
<div class="c14g" style="left:185.5px;top:372.4px">営業：</div><div class="c14" style="left:234.0px;top:372.4px">-</div>
<div class="c16 cc" style="left:351.7px;width:77.1px;top:360.4px">新規</div>
<div class="badge" style="left:438.9px;top:354.9px"><span>未受付</span></div>
<div class="c17 red cc" style="left:659.5px;width:88.9px;top:360.4px">未連携</div>
<div class="c17" style="left:819.6px;top:349.4px">ウェビナー株式会社</div><div class="c14s" style="left:820.4px;top:373.4px">ああああ</div>
<div class="c17" style="left:994.0px;top:349.4px">ウェビナー千葉現場</div><div class="c14s" style="left:995.0px;top:373.4px"><span class="lt2">0995</span></div>
<div class="c17" style="left:1184.0px;top:360.4px"><span class="lt">12m</span>スカイマスター</div>
<div class="abs" style="left:1415.9px;top:361.9px;width:27px;height:27px"><svg width="27" height="27" viewBox="0 0 27 27"><circle cx="13.5" cy="13.5" r="13.3" fill="#dcdcdc"/><path d="M7.6 13.8 L11.8 18 L19.6 9.6" fill="none" stroke="#fff" stroke-width="2.3"/></svg></div>
<div class="c17" style="left:1457.0px;top:360.4px">未連絡</div>
<div class="c17 cc" style="left:1592.3px;width:86.2px;top:360.4px;margin-top:-1.6px">-</div>
<div class="tr" style="top:404.9px;height:59.6px;background:#fff;width:1678.5px"></div>
<div class="c17" style="left:-5.5px;top:419.5px">00)</div>
<div class="c17 cc" style="left:31.0px;width:82.3px;top:419.5px">配送</div>
<div class="c14g" style="left:185.5px;top:409.5px">注文：</div><div class="c14" style="left:234.0px;top:409.5px">-</div>
<div class="c14g" style="left:185.5px;top:431.5px">営業：</div><div class="c14" style="left:234.0px;top:431.5px">-</div>
<div class="c16 cc" style="left:351.7px;width:77.1px;top:419.5px">新規</div>
<div class="badge" style="left:438.9px;top:414.0px"><span>未受付</span></div>
<div class="c17 red cc" style="left:659.5px;width:88.9px;top:419.5px">未連携</div>
<div class="c17" style="left:819.6px;top:408.5px">ウェビナー株式会社</div><div class="c14s" style="left:820.4px;top:432.5px">ああああ</div>
<div class="c17" style="left:994.0px;top:408.5px">ウェビナー千葉現場</div><div class="c14s" style="left:995.0px;top:432.5px"><span class="lt2">0995</span></div>
<div class="c17" style="left:1184.0px;top:419.5px"><span class="lt">2t</span>ダンプテスト</div>
<div class="abs" style="left:1415.9px;top:421.0px;width:27px;height:27px"><svg width="27" height="27" viewBox="0 0 27 27"><circle cx="13.5" cy="13.5" r="13.3" fill="#dcdcdc"/><path d="M7.6 13.8 L11.8 18 L19.6 9.6" fill="none" stroke="#fff" stroke-width="2.3"/></svg></div>
<div class="c17" style="left:1457.0px;top:419.5px">未連絡</div>
<div class="c17 cc" style="left:1592.3px;width:86.2px;top:419.5px;margin-top:-1.6px">-</div>
<div class="tr" style="top:464.0px;height:59.6px;background:#f7f7f7;width:1678.5px"></div>
<div class="c17" style="left:-5.5px;top:478.6px">00)</div>
<div class="c17 cc" style="left:31.0px;width:82.3px;top:478.6px">配送</div>
<div class="c14g" style="left:185.5px;top:468.6px">注文：</div><div class="c14" style="left:234.0px;top:468.6px">-</div>
<div class="c14g" style="left:185.5px;top:490.6px">営業：</div><div class="c14" style="left:234.0px;top:490.6px">-</div>
<div class="c16 cc" style="left:351.7px;width:77.1px;top:478.6px">新規</div>
<div class="badge" style="left:438.9px;top:473.1px"><span>未受付</span></div>
<div class="c17 red cc" style="left:659.5px;width:88.9px;top:478.6px">未連携</div>
<div class="c17" style="left:819.6px;top:467.6px">ウェビナー株式会社</div><div class="c14s" style="left:820.4px;top:491.6px">ああああ</div>
<div class="c17" style="left:994.0px;top:467.6px">ウェビナー千葉現場</div><div class="c14s" style="left:995.0px;top:491.6px"><span class="lt2">0995</span></div>
<div class="c17" style="left:1184.0px;top:478.6px"><span class="lt">9.9m</span>スカイマスター</div>
<div class="abs" style="left:1415.9px;top:480.1px;width:27px;height:27px"><svg width="27" height="27" viewBox="0 0 27 27"><circle cx="13.5" cy="13.5" r="13.3" fill="#dcdcdc"/><path d="M7.6 13.8 L11.8 18 L19.6 9.6" fill="none" stroke="#fff" stroke-width="2.3"/></svg></div>
<div class="c17" style="left:1457.0px;top:478.6px">未連絡</div>
<div class="c17 cc" style="left:1592.3px;width:86.2px;top:478.6px;margin-top:-1.6px">-</div>
<div class="vl" style="left:30.5px"></div>
<div class="vl" style="left:112.8px"></div>
<div class="vl" style="left:174.2px"></div>
<div class="vl" style="left:351.2px"></div>
<div class="vl" style="left:428.3px"></div>
<div class="vl" style="left:659.0px"></div>
<div class="vl" style="left:747.9px"></div>
<div class="vl" style="left:809.0px"></div>
<div class="vl" style="left:984.1px"></div>
<div class="vl" style="left:1172.8px"></div>
<div class="vl" style="left:1403.5px"></div>
<div class="vl" style="left:1591.8px"></div></div>
<div class="abs" style="left:1678.5px;top:551.5px;width:21.5px;height:499px;background:#fafafa;border-left:1px solid #f0f0f0"></div>
<div class="abs" style="left:1684.0px;top:557.3px;width:12.5px;height:152px;border-radius:7px;background:#c1c1c1"></div>
<div class="abs" style="left:-10px;top:1050px;width:1710.0px;height:23px;background:#fafafa;border-top:1px solid #e3e3e3"></div>
<div class="abs" style="left:-10px;top:1055.8px;width:1323.6px;height:12px;border-radius:6px;background:#c1c1c1"></div>
<div id="ft"></div>
<div class="pinfo" style="left:818.8px;top:1110.3px">全 67 件中 1 件 ～ 25 件を表示</div><svg class="abs" style="left:1193.8px;top:1115.3px" width="14" height="20" viewBox="0 0 14 20"><path d="M10.5 3 L3.5 10 L10.5 17" fill="none" stroke="#7f9be0" stroke-width="2.4"/></svg><div class="pcur" style="left:1239.0px;top:1111.9px">1</div><div class="pnum" style="left:1277.8px;top:1110.8px">2</div><div class="pnum" style="left:1318.4px;top:1110.8px">3</div><svg class="abs" style="left:1377.8px;top:1115.3px" width="14" height="20" viewBox="0 0 14 20"><path d="M3.5 3 L10.5 10 L3.5 17" fill="none" stroke="#2249b0" stroke-width="2.4"/></svg><div class="psel" style="left:1538.8px;top:1109.3px">25</div><div class="tri" style="left:1598.4px;top:1120.8px;border-top-color:#6e6e6e"></div><div class="abs" style="left:1538.8px;top:1140.8px;width:80px;height:1.5px;background:#8a8a8a"></div><div class="pper" style="left:1638.2px;top:1110.3px">件ずつ表示</div>
  <div id="lsh"></div>
</div>

<div class="redbox" style="left:5px;top:437px;width:137px;height:71px"></div>
<div class="redbox" style="left:149px;top:944px;width:287px;height:71px"></div>

</body>
</html>
